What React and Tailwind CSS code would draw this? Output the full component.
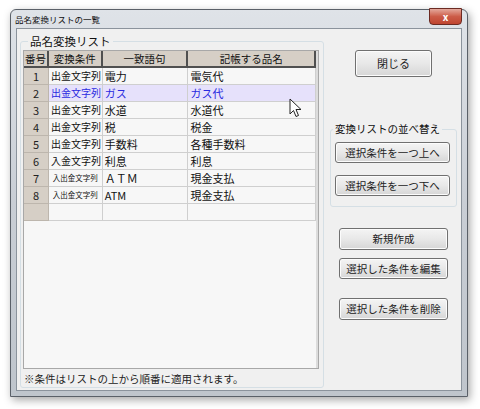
import React from 'react';

const rows = [
  { no: '1', cond: '出金文字列', word: '電力', name: '電気代' },
  { no: '2', cond: '出金文字列', word: 'ガス', name: 'ガス代', selected: true },
  { no: '3', cond: '出金文字列', word: '水道', name: '水道代' },
  { no: '4', cond: '出金文字列', word: '税', name: '税金' },
  { no: '5', cond: '出金文字列', word: '手数料', name: '各種手数料' },
  { no: '6', cond: '入金文字列', word: '利息', name: '利息' },
  { no: '7', cond: '入出金文字列', word: 'ＡＴＭ', name: '現金支払', small: true },
  { no: '8', cond: '入出金文字列', word: 'ATM', name: '現金支払', small: true },
  { no: '', cond: '', word: '', name: '' },
];

const font = { fontFamily: '"Noto Sans CJK JP", "Noto Sans", sans-serif' };

const Button = ({ children, className = '' }) => (
  <div
    className={`flex items-center justify-center whitespace-nowrap rounded-[3px] border border-[#707070] bg-gradient-to-b from-[#f4f4f4] via-[#e8e8e8] to-[#d6d6d6] text-[10.5px] text-[#222] shadow-[inset_0_0_0_1px_#fcfcfc] ${className}`}
  >
    {children}
  </div>
);

const Cursor = () => (
  <svg width="14" height="20" viewBox="0 0 14 20" className="absolute left-[289px] top-[98px]">
    <path d="M1 1 L1 16 L4.5 12.5 L7 18.5 L9.5 17.5 L7 11.5 L12 11.5 Z" fill="#fff" stroke="#222" strokeWidth="1" strokeLinejoin="round" />
  </svg>
);

export default function App() {
  return (
    <div className="relative h-[409px] w-[480px] overflow-hidden bg-white" style={font}>
      <div className="ml-[10px] mt-[9px] flex h-[388px] w-[458px] flex-col rounded-t-[6px] border border-[#5a6068] bg-gradient-to-b from-[#dfe3e8] via-[#c9ced5] to-[#bfc5cc] shadow-[2px_3px_8px_rgba(0,0,0,0.35)]">
        {/* title bar */}
        <div className="flex h-[20px] items-center justify-between pl-[4px] pr-[5px]">
          <span className="whitespace-nowrap pt-[1px] text-[8.5px] text-[#111]">品名変換リストの一覧</span>
          <div className="-mt-[2px] flex h-[17px] w-[33px] items-center justify-center self-start rounded-b-[4px] border border-[#6b2a22] bg-gradient-to-b from-[#e3a89c] via-[#cc5c48] to-[#bf4530] text-[10px] font-bold leading-none text-white">
            x
          </div>
        </div>
        {/* client */}
        <div className="mx-[5px] mb-[5px] flex flex-1 border border-[#8b939c] bg-[#f0f0f0]">
          {/* left group */}
          <div className="relative ml-[3px] mt-[12px] mb-[2px] flex w-[304px] flex-col rounded-[3px] border border-[#d5dfe5] pl-[2px] pr-[4px] pt-[8px]">
            <span className="absolute -top-[10px] left-[7px] whitespace-nowrap bg-[#f0f0f0] px-[2px] text-[11.5px] leading-[18px] text-[#111]">品名変換リスト</span>
            <div className="flex h-[319px] flex-col border border-[#a8a8a8] bg-[#f7f7f7]">
              <div className="flex h-full flex-col border-r-2 border-r-[#dcdcdc]">
                {/* header */}
                <div className="flex h-[17px] shrink-0 whitespace-nowrap text-[10.5px] leading-[15px] text-[#111]">
                  <div className="flex w-[25px] items-center justify-center border-b-2 border-r-2 border-[#505050] bg-[#d6cfc6]">番号</div>
                  <div className="flex w-[54px] items-center justify-center border-b-2 border-r-2 border-[#505050] bg-[#d6cfc6]">変換条件</div>
                  <div className="flex w-[86px] items-center justify-center border-b-2 border-r-2 border-[#505050] bg-[#d6cfc6]">一致語句</div>
                  <div className="flex w-[128px] items-center justify-center border-b-2 border-r-2 border-[#505050] bg-[#d6cfc6]">記帳する品名</div>
                </div>
                {rows.map((r, i) => (
                  <div
                    key={i}
                    className={`flex h-[17px] shrink-0 whitespace-nowrap text-[11px] leading-[16px] ${r.selected ? 'bg-[#e6e1fb] text-[#2a2ae0]' : 'text-[#111]'}`}
                  >
                    <div className="flex w-[25px] items-center justify-center border-b border-r border-[#bdb6ad] bg-[#d6cfc6] text-[#222]">{r.no}</div>
                    <div className={`flex w-[54px] items-center overflow-hidden border-b border-r border-[#cfcfcf] ${r.small ? 'justify-center text-[7.5px]' : 'pl-[2px] text-[10px]'}`}>{r.cond}</div>
                    <div className="flex w-[86px] items-center border-b border-r border-[#cfcfcf] pl-[2px]">{r.word}</div>
                    <div className="flex w-[128px] items-center border-b border-r border-[#cfcfcf] pl-[2px]">{r.name}</div>
                  </div>
                ))}
              </div>
            </div>
            <div className="whitespace-nowrap pl-[1px] pt-[2px] text-[10.5px] leading-[16px] text-[#222]">※条件はリストの上から順番に適用されます。</div>
          </div>
          {/* right column */}
          <div className="flex flex-1 flex-col pl-[6px] pr-[4px]">
            <Button className="ml-[25px] mt-[21px] h-[27px] w-[77px] text-[11px]">閉じる</Button>
            <div className="relative mt-[52px] flex h-[78px] w-[127px] flex-col gap-[12px] rounded-[3px] border border-[#d5dfe5] pl-[4px] pt-[12px]">
              <span className="absolute -top-[10px] left-[2px] whitespace-nowrap bg-[#f0f0f0] px-[2px] text-[10.5px] leading-[18px] text-[#111]">変換リストの並べ替え</span>
              <Button className="h-[21px] w-[115px]">選択条件を一つ上へ</Button>
              <Button className="h-[21px] w-[115px]">選択条件を一つ下へ</Button>
            </div>
            <Button className="ml-[9px] mt-[21px] h-[22px] w-[109px]">新規作成</Button>
            <Button className="ml-[9px] mt-[8px] h-[21px] w-[109px]">選択した条件を編集</Button>
            <Button className="ml-[9px] mt-[19px] h-[22px] w-[109px]">選択した条件を削除</Button>
          </div>
        </div>
      </div>
      <Cursor />
    </div>
  );
}
